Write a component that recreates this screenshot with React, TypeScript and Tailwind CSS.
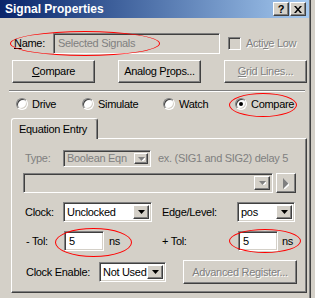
import React from 'react';

const sunken =
  'border border-t-[#808080] border-l-[#808080] border-b-white border-r-white shadow-[inset_1px_1px_0_#404040,inset_-1px_-1px_0_#d4d0c8]';
const raised =
  'border border-t-white border-l-white border-b-[#404040] border-r-[#404040] shadow-[inset_-1px_-1px_0_#808080,inset_1px_1px_0_#d4d0c8]';
const disabledText = 'text-[#808080] [text-shadow:1px_1px_0_#ffffff]';

const DownArrow: React.FC<{ disabled?: boolean }> = ({ disabled }) => (
  <svg width="7" height="4" viewBox="0 0 7 4">
    {disabled && <path d="M1 1h7L4.5 5z" fill="#ffffff" />}
    <path d="M0 0h7L3.5 4z" fill={disabled ? '#808080' : '#000000'} />
  </svg>
);

interface ComboProps {
  value: string;
  className: string;
  disabled?: boolean;
  btnClass?: string;
}

const Combo: React.FC<ComboProps> = ({ value, className, disabled, btnClass = 'w-[16px]' }) => (
  <div
    className={`flex items-stretch p-[2px] ${sunken} ${disabled ? 'bg-[#d4d0c8]' : 'bg-white'} ${className}`}
  >
    <div
      className={`flex-1 min-w-0 overflow-hidden flex items-center pl-[1px] ${disabled ? 'text-[#808080]' : 'text-black'}`}
    >
      {value}
    </div>
    <div className={`shrink-0 flex items-center justify-center bg-[#d4d0c8] ${raised} ${btnClass}`}>
      <DownArrow disabled={disabled} />
    </div>
  </div>
);

const Radio: React.FC<{ label: string; checked?: boolean; className: string }> = ({
  label,
  checked,
  className,
}) => (
  <div className={`flex items-center gap-[4px] ${className}`}>
    <div className="w-[12px] h-[12px] rounded-full bg-white border border-t-[#808080] border-l-[#808080] border-b-white border-r-white shadow-[inset_1px_1px_0_#404040,inset_-1px_-1px_0_#d4d0c8] flex items-center justify-center">
      {checked && <div className="w-[4px] h-[4px] rounded-full bg-black" />}
    </div>
    <span>{label}</span>
  </div>
);

const Ellipse: React.FC<{ className: string }> = ({ className }) => (
  <div className={`absolute rounded-[50%] border border-[#ff0000] pointer-events-none ${className}`} />
);

export default function App() {
  return (
    <div
      className="relative w-[315px] h-[298px] bg-[#d4d0c8] overflow-hidden text-[11px] leading-none tracking-[-0.3px] text-black whitespace-nowrap"
      style={{ fontFamily: '"Liberation Sans", Arial, sans-serif' }}
    >
      <div className="w-[311px] h-full border-r border-r-[#404040] shadow-[inset_-1px_0_0_#808080]">
        {/* title bar */}
        <div className="w-[309px] h-[18px] flex items-center justify-between pl-[5px] pr-[3px] bg-linear-to-r from-[#0a246a] to-[#a6caf0]">
          <span className="text-white font-bold text-[12px] tracking-normal">Signal Properties</span>
          <div className="flex gap-[1px]">
            <div className={`w-[16px] h-[14px] bg-[#d4d0c8] flex items-center justify-center font-bold text-[11px] ${raised}`}>
              ?
            </div>
            <div className={`w-[16px] h-[14px] bg-[#d4d0c8] flex items-center justify-center ${raised}`}>
              <svg width="8" height="7" viewBox="0 0 8 7">
                <path d="M0 0h2l2 2.5L6 0h2L5 3.5 8 7H6L4 4.5 2 7H0l3-3.5z" fill="#000" />
              </svg>
            </div>
          </div>
        </div>

        {/* name row */}
        <div className="mt-[15px] h-[21px] flex items-center pl-[14px]">
          <span className="w-[39px]">
            <span className="underline">N</span>ame:
          </span>
          <div className={`w-[167px] h-[21px] flex items-center pl-[4px] text-[#808080] bg-[#d4d0c8] ${sunken}`}>
            Selected Signals
          </div>
          <div className={`ml-[8px] w-[13px] h-[13px] bg-[#d4d0c8] ${sunken}`} />
          <span className={`ml-[5px] ${disabledText}`}>
            Acti<span className="underline">v</span>e Low
          </span>
        </div>

        {/* buttons */}
        <div className="mt-[6px] h-[23px] flex pl-[12px] gap-[23px]">
          <div className={`w-[83px] h-[23px] flex items-center justify-center ${raised}`}>
            <span>
              <span className="underline">C</span>ompare
            </span>
          </div>
          <div className={`w-[83px] h-[23px] flex items-center justify-center ${raised}`}>
            <span>
              Analog P<span className="underline">r</span>ops...
            </span>
          </div>
          <div className={`w-[83px] h-[23px] flex items-center justify-center ${raised}`}>
            <span className={disabledText}>
              <span className="underline">G</span>rid Lines...
            </span>
          </div>
        </div>

        {/* separator */}
        <div className="mt-[7px] ml-[9px] w-[296px] border-t border-t-[#808080] border-b border-b-white" />

        {/* radios */}
        <div className="mt-[4px] h-[16px] flex items-center pl-[16px]">
          <Radio label="Drive" className="w-[66px]" />
          <Radio label="Simulate" className="w-[81px]" />
          <Radio label="Watch" className="w-[72px]" />
          <Radio label="Compare" checked className="w-[70px]" />
        </div>

        {/* tab */}
        <div className="mt-[6px] ml-[11px] relative z-10 -mb-[1px] w-[87px] h-[21px] bg-[#d4d0c8] border-t border-l border-r border-t-white border-l-white border-r-[#404040] rounded-t-[3px] shadow-[inset_-1px_0_0_#808080] flex items-center pl-[7px]">
          Equation Entry
        </div>
        <div className="ml-[11px] w-[296px] h-[155px] border border-t-white border-l-white border-b-[#404040] border-r-[#404040] shadow-[inset_-1px_-1px_0_#808080]">
          {/* type */}
          <div className="mt-[11px] h-[17px] flex items-center pl-[13px]">
            <span className="w-[38px] text-[#808080]">Type:</span>
            <Combo value="Boolean Eqn" disabled className="w-[88px] h-[17px]" btnClass="w-[14px]" />
            <span className="ml-[7px] text-[#808080]">ex. (SIG1 and SIG2) delay 5</span>
          </div>

          {/* expression */}
          <div className="mt-[6px] h-[20px] flex items-center pl-[11px]">
            <Combo value="" disabled className="w-[250px] h-[20px]" />
            <div className={`ml-[3px] w-[20px] h-[20px] flex items-center justify-center ${raised}`}>
              <svg width="6" height="11" viewBox="0 0 6 11">
                <path d="M1 1v11l6-5.5z" fill="#ffffff" />
                <path d="M0 0v11l5.5-5.5z" fill="#808080" />
              </svg>
            </div>
          </div>

          {/* clock */}
          <div className="mt-[9px] h-[20px] flex items-center pl-[13px]">
            <span className="w-[38px]">Clock:</span>
            <Combo value="Unclocked" className="w-[89px] h-[20px]" />
            <span className="ml-[10px] w-[75px]">Edge/Level:</span>
            <Combo value="pos" className="w-[58px] h-[20px]" />
          </div>

          {/* tolerances */}
          <div className="mt-[9px] h-[20px] flex items-center pl-[14px]">
            <span className="w-[38px]">- Tol:</span>
            <div className={`w-[40px] h-[20px] bg-white flex items-center pl-[4px] ${sunken}`}>5</div>
            <span className="ml-[5px] w-[53px]">ns</span>
            <span className="w-[76px]">+ Tol:</span>
            <div className={`w-[40px] h-[20px] bg-white flex items-center pl-[4px] ${sunken}`}>5</div>
            <span className="ml-[4px]">ns</span>
          </div>

          {/* clock enable */}
          <div className="mt-[9px] h-[24px] flex items-center pl-[14px]">
            <span className="w-[73px]">Clock Enable:</span>
            <Combo value="Not Used" className="w-[67px] h-[20px]" />
            <div className={`ml-[17px] w-[114px] h-[24px] flex items-center justify-center ${raised}`}>
              <span className={disabledText}>Advanced Register...</span>
            </div>
          </div>
        </div>
      </div>

      {/* annotations */}
      <Ellipse className="left-[10px] top-[31px] w-[150px] h-[25px]" />
      <Ellipse className="left-[229px] top-[93px] w-[68px] h-[24px]" />
      <Ellipse className="left-[55px] top-[228px] w-[77px] h-[29px]" />
      <Ellipse className="left-[229px] top-[229px] w-[72px] h-[24px]" />
    </div>
  );
}
